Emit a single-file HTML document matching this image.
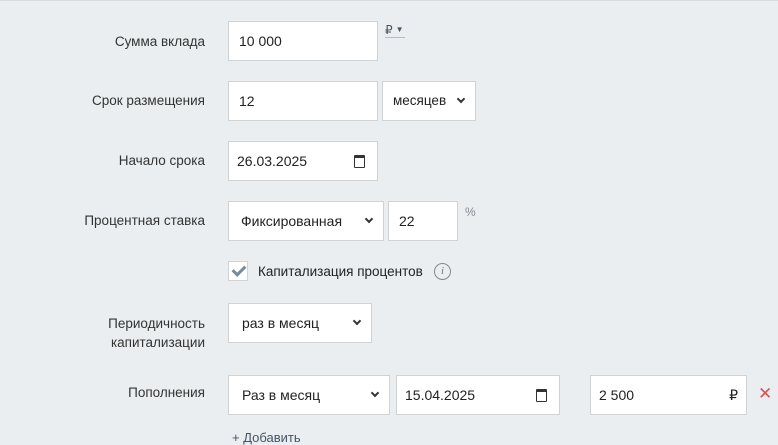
<!DOCTYPE html><html><head><meta charset="utf-8"><style>
body{margin:0;width:778px;height:435px;overflow:hidden;background:#ebeef0;font-family:"Liberation Sans","DejaVu Sans",sans-serif;font-size:14px;color:#222;position:relative}
.t{position:absolute;left:0;top:0;width:778px;height:1px;background:#d6dcdf}
.l{position:absolute;right:573px;text-align:right;color:#333;font-size:13.5px;line-height:19px}
.b{position:absolute;background:#fff;border:1px solid #cfd3d6;box-sizing:border-box;height:40px;line-height:38px;padding-left:10px;font-size:14px;color:#222}
.ch{position:absolute;right:11px;width:4px;height:4px;border-right:2px solid #333;border-bottom:2px solid #333;transform:rotate(45deg);top:14px}
.cal{position:absolute;right:12px;top:13px;width:9px;height:9px;border:1.5px solid #333;border-top-width:3px;border-radius:1px}
</style></head><body><div class="t"></div>
<div class="l" style="top:32px">Сумма вклада</div>
<div class="b" style="left:228px;top:21px;width:150px">10 000</div>
<div style="position:absolute;left:385px;top:23px;font-size:12px;color:#456;border-bottom:1px solid #bbb;width:20px;line-height:14px;white-space:nowrap">₽<span style="font-size:8px;margin-left:3px;vertical-align:2px">▼</span></div>
<div class="l" style="top:91px">Срок размещения</div>
<div class="b" style="left:228px;top:81px;width:150px">12</div>
<div class="b" style="left:382px;top:81px;width:94px;font-size:13.5px">месяцев<i class="ch"></i></div>
<div class="l" style="top:151px">Начало срока</div>
<div class="b" style="left:228px;top:141px;width:150px;padding-left:8px">26.03.2025<i class="cal"></i></div>
<div class="l" style="top:211px">Процентная ставка</div>
<div class="b" style="left:228px;top:201px;width:156px;padding-left:12px">Фиксированная<i class="ch"></i></div>
<div class="b" style="left:388px;top:201px;width:70px">22</div>
<div style="position:absolute;left:465px;top:205px;font-size:12px;color:#889">%</div>
<div style="position:absolute;left:228px;top:261px;width:20px;height:20px;background:#fff;border:1px solid #cfd3d6;box-sizing:border-box"><div style="position:absolute;left:6px;top:1px;width:5px;height:10px;border-right:3px solid #7a8a98;border-bottom:3px solid #7a8a98;transform:rotate(45deg)"></div></div>
<div style="position:absolute;left:258px;top:263px;font-size:13.5px;line-height:18px">Капитализация процентов</div>
<div style="position:absolute;left:434px;top:263px;width:15px;height:15px;border:1px solid #888;border-radius:50%;font-size:11px;line-height:15px;text-align:center;color:#777;font-style:italic;font-family:'Liberation Serif',serif">i</div>
<div class="l" style="top:314px">Периодичность<br>капитализации</div>
<div class="b" style="left:228px;top:303px;width:144px;padding-left:13px">раз в месяц<i class="ch"></i></div>
<div class="l" style="top:383px">Пополнения</div>
<div class="b" style="left:228px;top:375px;width:162px;padding-left:13px">Раз в месяц<i class="ch"></i></div>
<div class="b" style="left:396px;top:375px;width:164px;padding-left:8px">15.04.2025<i class="cal"></i></div>
<div class="b" style="left:590px;top:375px;width:157px;padding-left:8px">2 500<span style="position:absolute;right:8px">₽</span></div>
<div style="position:absolute;left:758px;top:384px;color:#d9534f;font-size:17px">✕</div>
<div style="position:absolute;left:232px;top:430px;font-size:13px;color:#456">+ Добавить</div>
</body></html>
